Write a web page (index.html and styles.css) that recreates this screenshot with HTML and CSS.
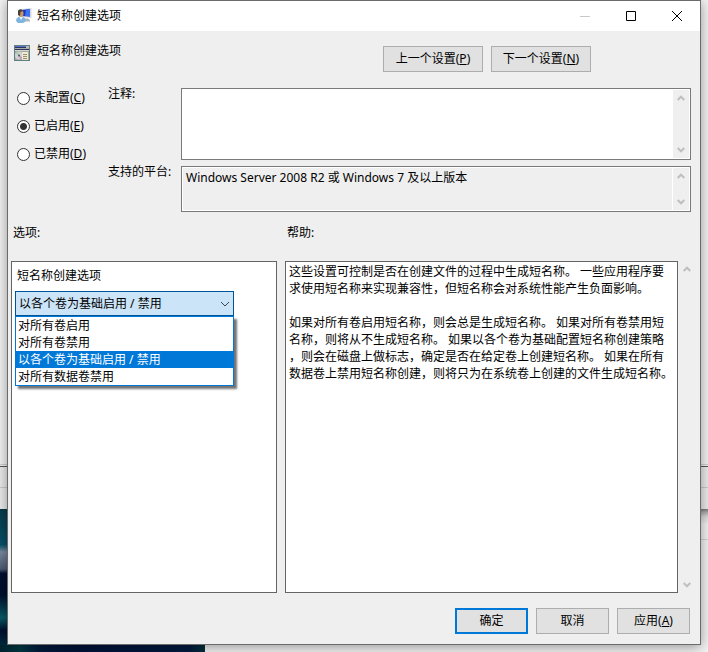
FILE: index.html
```html
<!DOCTYPE html>
<html lang="zh-CN">
<head>
<meta charset="utf-8">
<meta name="viewport" content="width=device-width, initial-scale=1">
<title>短名称创建选项</title>
<link rel="stylesheet" href="styles.css">
</head>
<body>
<svg class="symbols" aria-hidden="true">
  <symbol id="up" viewBox="0 0 8 6"><path d="M.7 5 4 1.7 7.3 5" fill="none" stroke="#bfbfbf" stroke-width="2"/></symbol>
  <symbol id="down" viewBox="0 0 8 6"><path d="M.7 1 4 4.3 7.3 1" fill="none" stroke="#bfbfbf" stroke-width="2"/></symbol>
</svg>
<main class="window">
  <header class="titlebar">
    <svg class="icon" viewBox="0 0 16 16" aria-hidden="true">
      <path d="M5 1 15.500 0v10L5 9z" fill="#d5d9dd"/>
      <path d="M6 2 14 1v7.500L6 8z" fill="#1238c4"/>
      <path d="M10 1.500 14 1v7.500L9 8z" fill="#3f72ef"/>
      <path d="M9 10.500h3l2 1.500v1.500H8z" fill="#aeb5bc"/>
      <path d="M0 13c0-3 2-4.500 5-4.500s5 1.500 4.500 5L7 15H2z" fill="#7eb4df"/>
      <path d="M3.500 9 5 12l2-3z" fill="#eef6fc"/>
      <ellipse cx="5" cy="5.500" rx="2.500" ry="3.500" fill="#c99864"/>
      <path d="M2 7V3.500C2 1 6 .5 7 3L4.500 4 4 8z" fill="#4a4034"/>
    </svg>
    <h1 class="caption">短名称创建选项</h1>
    <div class="window-buttons">
      <button class="window-button" type="button" aria-label="最小化" disabled><svg viewBox="0 0 10 10"><path d="M0 5.500h10" stroke="#c8c8c8"/></svg></button>
      <button class="window-button" type="button" aria-label="最大化"><svg viewBox="0 0 10 10"><path d="M.5.5h9v9h-9z" fill="none" stroke="#000"/></svg></button>
      <button class="window-button" type="button" aria-label="关闭"><svg viewBox="0 0 10 10"><path d="m0 0 10 10M10 0 0 10" stroke="#000"/></svg></button>
    </div>
  </header>

  <div class="setting-head">
    <svg class="icon" viewBox="0 0 16 16" aria-hidden="true">
      <path d="M0 0h16v16H0z" fill="#5f7f80"/>
      <path d="M1 1h14v4H1z" fill="#2b3560"/>
      <path d="M1 1h11v1H1z" fill="#5570c8"/>
      <path d="M12 1h3v2h-3z" fill="#b9bcae"/>
      <path d="M1 3h14v1H1z" fill="#a9ada8"/>
      <path d="M1 6h14v9H1z" fill="#a5a7a0"/>
      <path d="M1 5h14v1H1z" fill="#d8d7cc"/>
      <circle cx="5" cy="10.500" r="4" fill="#d3d0d6"/>
      <path d="m5 10.500-3.500-2L4 6.500z" fill="#a0cfa9"/>
      <path d="m5 10.500 3.500 2L6 14.500z" fill="#bd95bd"/>
      <circle cx="5" cy="10.500" r="1" fill="#455"/>
      <path d="M8 7h6v8H8z" fill="#eeead2"/>
      <path d="M9 9.500h4M9 11.500h4M9 13.500h4" stroke="#9a8e74"/>
    </svg>
    <h2 class="setting-name">短名称创建选项</h2>
    <nav class="setting-nav">
      <button class="button button-wide" type="button">上一个设置(<u>P</u>)</button>
      <button class="button button-wide" type="button">下一个设置(<u>N</u>)</button>
    </nav>
  </div>

  <form class="form">
    <div class="states">
      <label class="state"><input type="radio" name="state"><span>未配置(<u>C</u>)</span></label>
      <label class="state"><input type="radio" name="state" checked><span>已启用(<u>E</u>)</span></label>
      <label class="state"><input type="radio" name="state"><span>已禁用(<u>D</u>)</span></label>
    </div>
    <label class="field-label" for="comment">注释:</label>
    <div class="field field-tall">
      <textarea id="comment"></textarea>
      <div class="scrollbar"><svg><use href="#up"/></svg><svg><use href="#down"/></svg></div>
    </div>
    <label class="field-label" for="platform">支持的平台:</label>
    <div class="field field-readonly">
      <textarea id="platform" readonly>Windows Server 2008 R2 或 Windows 7 及以上版本</textarea>
      <div class="scrollbar"><svg><use href="#up"/></svg><svg><use href="#down"/></svg></div>
    </div>
  </form>

  <div class="panels">
    <section class="column">
      <h3 class="column-title">选项:</h3>
      <div class="panel options">
        <label class="option-label" for="option">短名称创建选项</label>
        <div class="combo">
          <select id="option" class="combo-box">
            <option>对所有卷启用</option>
            <option>对所有卷禁用</option>
            <option selected>以各个卷为基础启用 / 禁用</option>
            <option>对所有数据卷禁用</option>
          </select>
          <svg class="combo-arrow" viewBox="0 0 10 6" aria-hidden="true"><path d="m1 1 4 4 4-4" fill="none" stroke="#444"/></svg>
          <ul class="combo-list" role="listbox" aria-label="短名称创建选项">
            <li role="option">对所有卷启用</li>
            <li role="option">对所有卷禁用</li>
            <li role="option" aria-selected="true">以各个卷为基础启用 / 禁用</li>
            <li role="option">对所有数据卷禁用</li>
          </ul>
        </div>
      </div>
    </section>
    <section class="column">
      <h3 class="column-title">帮助:</h3>
      <div class="help">
        <div class="panel help-text">
          <p>这些设置可控制是否在创建文件的过程中生成短名称。 一些应用程序要<br>求使用短名称来实现兼容性，但短名称会对系统性能产生负面影响。</p>
          <p>如果对所有卷启用短名称，则会总是生成短名称。 如果对所有卷禁用短<br>名称，则将从不生成短名称。 如果以各个卷为基础配置短名称创建策略<br>，则会在磁盘上做标志，确定是否在给定卷上创建短名称。 如果在所有<br>数据卷上禁用短名称创建，则将只为在系统卷上创建的文件生成短名称。</p>
        </div>
        <div class="scrollbar"><svg><use href="#up"/></svg><svg><use href="#down"/></svg></div>
      </div>
    </section>
  </div>

  <footer class="actions">
    <button class="button button-default" type="button">确定</button>
    <button class="button" type="button">取消</button>
    <button class="button" type="button">应用(<u>A</u>)</button>
  </footer>
</main>
</body>
</html>
```
FILE: styles.css
```css
* {
  box-sizing: border-box;
}

body {
  display: flex;
  min-height: 100vh;
  margin: 0;
  padding: 0 7px 7px;
  font: 12px/16px "Noto Sans", "Noto Sans CJK SC", sans-serif;
  color: #000;
  /* wallpaper at the lower left, then the edges of the windows behind */
  background:
    linear-gradient(90deg, #00222e, #013a44 20px, #001a3c 40px, #001238 80px, #001a40 190px, #023039) 0 645px / 205px 7px no-repeat,
    linear-gradient(#063c48, #08506a 25%, #7a8aa0 30%, #4d5c74 42%, #001030 45%, #000f2c 60%, #0a5a68 76%, #001030 85%, #003848) 0 509px / 7px 143px no-repeat,
    linear-gradient(#000f2c, #000f2c) 0 509px / 205px 143px no-repeat,
    linear-gradient(#d0d0d0, #d0d0d0) 0 464px / 100% 1px no-repeat,
    linear-gradient(#555, #555) 0 466px / 100% 1px no-repeat,
    linear-gradient(#ccc, #ccc) 0 487px / 100% 1px no-repeat,
    linear-gradient(#777, #aaa 3px, #ddd 8px, #ededed) 0 509px / 100% 14px no-repeat,
    linear-gradient(#d4d4d4, #d4d4d4) 0 539px / 100% 1px no-repeat,
    linear-gradient(#ececec, #ececec) 0 467px / 100% 42px no-repeat,
    #f3f3f3;
}

h1, h2, h3, p, ul {
  margin: 0;
  padding: 0;
  font: inherit;
}

button, select, textarea {
  margin: 0;
  font: inherit;
  color: inherit;
}

u {
  text-underline-offset: 1px;
}

.symbols {
  position: absolute;
  width: 0;
  height: 0;
}

.icon {
  flex: none;
  width: 16px;
  height: 16px;
}

.window {
  display: flex;
  flex: 1;
  flex-direction: column;
  min-width: 0;
  border: 1px solid #6b6b6b;
  background: #efefef;
  box-shadow: 0 2px 12px rgba(0, 0, 0, 0.4);
}

.titlebar {
  display: flex;
  align-items: center;
  height: 30px;
  padding-left: 8px;
  background: #fff;
}

.caption {
  flex: 1;
  margin-left: 5px;
}

.window-buttons {
  display: flex;
}

.window-button {
  display: grid;
  place-items: center;
  width: 46px;
  height: 30px;
  padding: 0;
  border: 0;
  background: none;
}

.window-button svg {
  width: 10px;
  height: 10px;
}

.setting-head {
  display: flex;
  align-items: flex-start;
  padding: 14px 109px 16px 6px;
}

.setting-name {
  margin-left: 7px;
  line-height: 12px;
}

.setting-nav {
  display: flex;
  gap: 8px;
  margin: 1px 0 0 auto;
}

.button {
  width: 73px;
  height: 26px;
  padding: 0;
  border: 1px solid #adadad;
  background: #e1e1e1;
}

.button-wide {
  width: 100px;
}

.button-default {
  border: 2px solid #0078d7;
}

.form {
  display: grid;
  grid-template-columns: 91px 73px 1fr;
  row-gap: 6px;
  padding: 0 9px;
}

.states {
  display: flex;
  flex-direction: column;
  grid-row: span 2;
  gap: 8px;
}

.state {
  display: flex;
  align-items: center;
  gap: 4px;
  height: 20px;
  line-height: 18px;
}

.state input {
  width: 13px;
  height: 13px;
  margin: 0;
  border: 1px solid #333;
  border-radius: 50%;
  background: #fff;
  appearance: none;
}

.state input:checked {
  background: radial-gradient(circle, #333 3px, #fff 4px);
}

.field-label {
  line-height: 12px;
}

.field {
  display: flex;
  height: 46px;
  padding: 1px;
  border: 1px solid #7a7a7a;
  background: #fff;
}

.field-tall {
  height: 72px;
}

.field textarea {
  flex: 1;
  min-width: 0;
  padding: 2px 3px;
  border: 0;
  outline: 0;
  background: none;
  resize: none;
  overflow: hidden;
}

.field-readonly textarea {
  margin-right: 1px;
  background: #efefef;
}

.scrollbar {
  display: flex;
  flex: none;
  flex-direction: column;
  align-items: center;
  justify-content: space-between;
  width: 16px;
  padding: 5px 0;
  background: #efefef;
}

.scrollbar svg {
  width: 8px;
  height: 6px;
}

.panels {
  display: grid;
  flex: 1;
  grid-template-columns: 266fr 410fr;
  gap: 8px;
  padding: 13px 5px 0 3px;
}

.column {
  display: flex;
  flex-direction: column;
  min-width: 0;
}

.column-title {
  margin: 0 2px 20px;
}

.panel {
  flex: 1;
  min-width: 0;
  border: 1px solid #646464;
  background: #fff;
}

.options {
  padding: 6px 42px 0 3px;
}

.option-label {
  display: block;
  margin: 0 2px 7px;
}

.combo {
  position: relative;
}

.combo-box {
  display: block;
  width: 100%;
  height: 25px;
  padding: 0 3px;
  border: 1px solid #005499;
  border-radius: 0;
  outline: 0;
  background: #cce4f7;
  appearance: none;
}

.combo-arrow {
  position: absolute;
  top: 10px;
  right: 4px;
  width: 10px;
  height: 6px;
  pointer-events: none;
}

.combo-list {
  position: absolute;
  top: 100%;
  right: 0;
  left: 0;
  border: 1px solid #0078d7;
  background: #fff;
  box-shadow: 3px 3px 2px rgba(0, 0, 0, 0.55);
  line-height: 17px;
  list-style: none;
}

.combo-list li {
  padding: 0 2px;
}

.combo-list [aria-selected="true"] {
  background: #0078d7;
  color: #fff;
}

.help {
  display: flex;
  flex: 1;
  gap: 1px;
}

.help-text {
  padding: 1px 3px;
  line-height: 17px;
  white-space: nowrap;
}

.help-text p + p {
  margin-top: 17px;
}

.actions {
  display: flex;
  justify-content: flex-end;
  gap: 8px;
  padding: 15px 10px 10px;
}
```
